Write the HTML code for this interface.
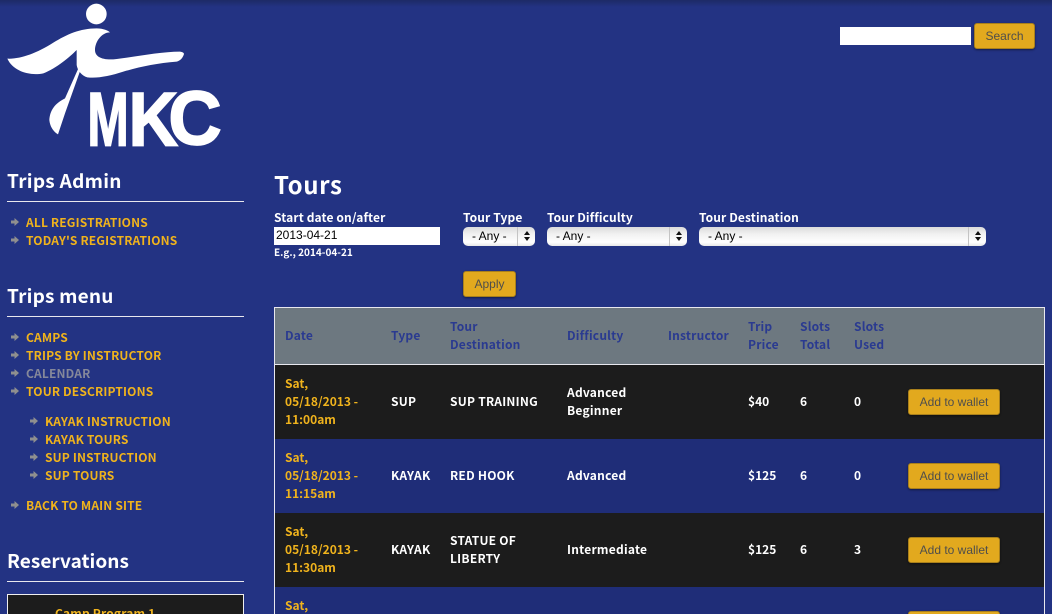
<!DOCTYPE html>
<html><head><meta charset="utf-8"><style>
html,body{margin:0;padding:0;width:1052px;height:614px;overflow:hidden}
#p{position:absolute;left:0;top:0;width:1052px;height:614px;overflow:hidden;background:#233383;font-family:"Noto Sans CJK JP","Liberation Sans",sans-serif;font-weight:700;font-size:12px;color:#fff;letter-spacing:.25px}
.t{position:absolute;white-space:nowrap;line-height:18px;height:18px}
.h{position:absolute;left:7px;font-size:19px;line-height:26px;letter-spacing:.29px;white-space:nowrap}
.r{position:absolute;left:7px;width:237px;height:1px;background:#e8e8ee}
.n{color:#f0b31c;letter-spacing:.16px}
.l{letter-spacing:.12px}
.a{position:absolute;width:9px;height:9px}
.b{position:absolute;box-sizing:border-box;background:#e2a91e;border:1px solid #a9801c;border-radius:3px;box-shadow:0 1px 2px rgba(0,0,0,.45);color:#4f4e4c;font:400 12px/24px "Liberation Sans",sans-serif;text-align:center;letter-spacing:0}
.w{left:908px;width:92px;height:26px}
.i{position:absolute;background:#fff;color:#000;font:400 12px/17px "Liberation Sans",sans-serif;letter-spacing:0}
.s{position:absolute;top:227px;height:19px;box-sizing:border-box;border-radius:5px;background:linear-gradient(#dcdcdc,#f0f0f0 35%,#fff 80%,#e8e8e8);color:#000;font:400 12px/18px "Liberation Sans",sans-serif;letter-spacing:0;padding-left:9px}
.s i{position:absolute;right:0;top:0;width:18px;height:19px;border-left:1px solid #c4c4c4;box-sizing:border-box}
.s i:before{content:"";position:absolute;left:6px;top:4px;border:3px solid transparent;border-top:0;border-bottom:4px solid #111}
.s i:after{content:"";position:absolute;left:6px;top:10px;border:3px solid transparent;border-bottom:0;border-top:4px solid #111}
.row{position:absolute;left:275px;width:769px;height:74px}
.y{color:#f0b31c;letter-spacing:0}
.d{letter-spacing:0}
.th{color:#2a3a90;letter-spacing:.2px}
</style></head><body><div id="p">
<div style="position:absolute;left:0;top:0;width:1052px;height:7px;background:linear-gradient(#1d2a66,#233383)"></div>

<svg style="position:absolute;left:0;top:0" width="260" height="160" viewBox="0 0 780 480">
<circle cx="289" cy="42" r="31" fill="#fff"/>
<path fill="#fff" d="M22,176 C60,178 110,160 160,128 C200,103 240,85 290,85 C310,85 325,92 330,97 C305,97 285,125 285,150 C285,170 305,180 340,178 C400,172 480,155 540,155 Q552,157 552,162 C548,175 540,182 530,185 C470,190 420,200 370,215 C330,228 290,236 262,232 C245,228 232,210 230,195 L230,150 C210,170 170,205 130,220 C90,228 40,215 22,176 Z"/>
<path fill="#fff" d="M236,203 L242,208 L195,340 L174,403 C160,395 150,380 148,360 C150,330 165,310 195,295 Z"/>
<g font-family="Liberation Sans" font-weight="700" font-size="228" fill="#fff" stroke="#fff" stroke-width="5" letter-spacing="0">
<text x="262" y="436" textLength="124" lengthAdjust="spacingAndGlyphs">M</text>
<text x="386" y="436" textLength="148" lengthAdjust="spacingAndGlyphs">K</text>
<text x="505" y="434" textLength="160" lengthAdjust="spacingAndGlyphs">C</text>
</g>
</svg>

<div class="i" style="left:840px;top:27px;width:131px;height:18px"></div>
<div class="b" style="left:974px;top:23px;width:61px;height:26px">Search</div>

<div class="h" style="top:168px">Trips Admin</div><div class="r" style="top:201px"></div>
<svg width="0" height="0" style="position:absolute"><defs><path id="ar" d="M0,2.5H3.5V0L8,4 3.5,8V5.5H0Z" fill="#8f8f8f"/></defs></svg>
<svg class="a" style="left:11px;top:218px"><use href="#ar"/></svg><div class="t n" style="left:26px;top:214px">ALL REGISTRATIONS</div>
<svg class="a" style="left:11px;top:236px"><use href="#ar"/></svg><div class="t n" style="left:26px;top:232px">TODAY'S REGISTRATIONS</div>

<div class="h" style="top:283px;letter-spacing:.2px">Trips menu</div><div class="r" style="top:316px"></div>
<svg class="a" style="left:11px;top:333px"><use href="#ar"/></svg><div class="t n" style="left:26px;top:329px">CAMPS</div>
<svg class="a" style="left:11px;top:351px"><use href="#ar"/></svg><div class="t n" style="left:26px;top:347px">TRIPS BY INSTRUCTOR</div>
<svg class="a" style="left:11px;top:369px"><use href="#ar"/></svg><div class="t n" style="left:26px;top:365px;color:#85889a">CALENDAR</div>
<svg class="a" style="left:11px;top:387px"><use href="#ar"/></svg><div class="t n" style="left:26px;top:383px">TOUR DESCRIPTIONS</div>
<svg class="a" style="left:30px;top:417px"><use href="#ar"/></svg><div class="t n" style="left:45px;top:413px">KAYAK INSTRUCTION</div>
<svg class="a" style="left:30px;top:435px"><use href="#ar"/></svg><div class="t n" style="left:45px;top:431px">KAYAK TOURS</div>
<svg class="a" style="left:30px;top:453px"><use href="#ar"/></svg><div class="t n" style="left:45px;top:449px">SUP INSTRUCTION</div>
<svg class="a" style="left:30px;top:471px"><use href="#ar"/></svg><div class="t n" style="left:45px;top:467px">SUP TOURS</div>
<svg class="a" style="left:11px;top:501px"><use href="#ar"/></svg><div class="t n" style="left:26px;top:497px">BACK TO MAIN SITE</div>

<div class="h" style="top:548px;letter-spacing:.05px">Reservations</div><div class="r" style="top:581px"></div>
<div style="position:absolute;left:7px;top:594px;width:235px;height:30px;border:1px solid #eee;background:#1c1c1c"></div>
<div class="t n" style="left:55px;top:605px">Camp Program 1</div>

<div style="position:absolute;left:274px;top:170px;font-size:24px;line-height:28px;letter-spacing:.6px">Tours</div>
<div class="t l" style="left:274px;top:209px">Start date on/after</div>
<div class="i" style="left:274px;top:227px;width:166px;height:18px;padding-left:2px;box-sizing:border-box">2013-04-21</div>
<div class="t" style="left:274px;top:243px;font-size:10px;letter-spacing:0">E.g., 2014-04-21</div>
<div class="t l" style="left:463px;top:209px">Tour Type</div>
<div class="s" style="left:463px;width:72px">- Any -<i></i></div>
<div class="t l" style="left:547px;top:209px">Tour Difficulty</div>
<div class="s" style="left:547px;width:140px">- Any -<i></i></div>
<div class="t l" style="left:699px;top:209px">Tour Destination</div>
<div class="s" style="left:699px;width:287px">- Any -<i></i></div>
<div class="b" style="left:463px;top:271px;width:53px;height:26px">Apply</div>

<div style="position:absolute;left:274px;top:307px;width:769px;height:320px;border:1px solid #e8e8ee;background:#1f2d78"></div>
<div style="position:absolute;left:275px;top:308px;width:769px;height:56px;background:#6d7880;border-bottom:1px solid #e8e8ee"></div>
<div class="t th" style="left:285px;top:327px">Date</div>
<div class="t th" style="left:391px;top:327px">Type</div>
<div class="t th" style="left:450px;top:318px">Tour</div>
<div class="t th" style="left:450px;top:336px">Destination</div>
<div class="t th" style="left:567px;top:327px">Difficulty</div>
<div class="t th" style="left:668px;top:327px">Instructor</div>
<div class="t th" style="left:748px;top:318px">Trip</div>
<div class="t th" style="left:748px;top:336px">Price</div>
<div class="t th" style="left:800px;top:318px">Slots</div>
<div class="t th" style="left:800px;top:336px">Total</div>
<div class="t th" style="left:854px;top:318px">Slots</div>
<div class="t th" style="left:854px;top:336px">Used</div>

<div class="row" style="top:365px;background:#1c1c1c"></div>
<div class="t y" style="left:285px;top:375px">Sat,</div>
<div class="t y" style="left:285px;top:393px">05/18/2013 -</div>
<div class="t y" style="left:285px;top:411px">11:00am</div>
<div class="t" style="left:391px;top:393px">SUP</div>
<div class="t" style="left:450px;top:393px">SUP TRAINING</div>
<div class="t" style="left:567px;top:384px">Advanced</div>
<div class="t" style="left:567px;top:402px">Beginner</div>
<div class="t d" style="left:748px;top:393px">$40</div>
<div class="t" style="left:800px;top:393px">6</div>
<div class="t" style="left:854px;top:393px">0</div>
<div class="b w" style="top:389px">Add to wallet</div>

<div class="t y" style="left:285px;top:449px">Sat,</div>
<div class="t y" style="left:285px;top:467px">05/18/2013 -</div>
<div class="t y" style="left:285px;top:485px">11:15am</div>
<div class="t" style="left:391px;top:467px">KAYAK</div>
<div class="t" style="left:450px;top:467px">RED HOOK</div>
<div class="t" style="left:567px;top:467px">Advanced</div>
<div class="t d" style="left:748px;top:467px">$125</div>
<div class="t" style="left:800px;top:467px">6</div>
<div class="t" style="left:854px;top:467px">0</div>
<div class="b w" style="top:463px">Add to wallet</div>

<div class="row" style="top:513px;background:#1c1c1c"></div>
<div class="t y" style="left:285px;top:523px">Sat,</div>
<div class="t y" style="left:285px;top:541px">05/18/2013 -</div>
<div class="t y" style="left:285px;top:559px">11:30am</div>
<div class="t" style="left:391px;top:541px">KAYAK</div>
<div class="t" style="left:450px;top:532px">STATUE OF</div>
<div class="t" style="left:450px;top:550px">LIBERTY</div>
<div class="t" style="left:567px;top:541px">Intermediate</div>
<div class="t d" style="left:748px;top:541px">$125</div>
<div class="t" style="left:800px;top:541px">6</div>
<div class="t" style="left:854px;top:541px">3</div>
<div class="b w" style="top:537px">Add to wallet</div>

<div class="t y" style="left:285px;top:597px">Sat,</div>
<div class="b w" style="top:611px"></div>
</div></body></html>
